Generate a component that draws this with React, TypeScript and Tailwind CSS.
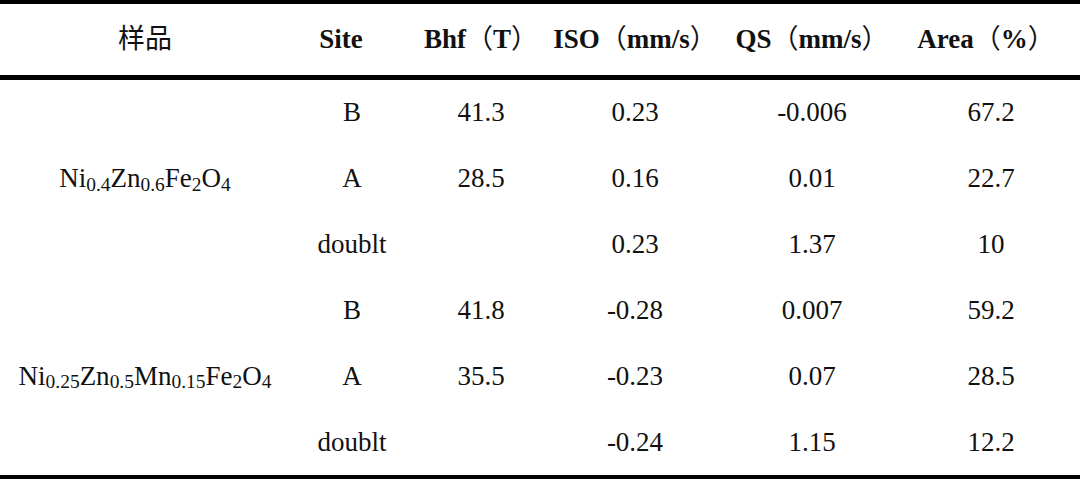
import type { ReactNode } from 'react';

type Row = { site: string; bhf: string; iso: string; qs: string; area: string };

const Sub = ({ children }: { children: ReactNode }) => (
  <sub className="text-[0.72em] -bottom-[0.32em]">{children}</sub>
);

const samples: { name: ReactNode; rows: Row[] }[] = [
  {
    name: (
      <>
        Ni<Sub>0.4</Sub>Zn<Sub>0.6</Sub>Fe<Sub>2</Sub>O<Sub>4</Sub>
      </>
    ),
    rows: [
      { site: 'B', bhf: '41.3', iso: '0.23', qs: '-0.006', area: '67.2' },
      { site: 'A', bhf: '28.5', iso: '0.16', qs: '0.01', area: '22.7' },
      { site: 'doublt', bhf: '', iso: '0.23', qs: '1.37', area: '10' },
    ],
  },
  {
    name: (
      <>
        Ni<Sub>0.25</Sub>Zn<Sub>0.5</Sub>Mn<Sub>0.15</Sub>Fe<Sub>2</Sub>O<Sub>4</Sub>
      </>
    ),
    rows: [
      { site: 'B', bhf: '41.8', iso: '-0.28', qs: '0.007', area: '59.2' },
      { site: 'A', bhf: '35.5', iso: '-0.23', qs: '0.07', area: '28.5' },
      { site: 'doublt', bhf: '', iso: '-0.24', qs: '1.15', area: '12.2' },
    ],
  },
];

const cols = 'grid grid-cols-[290px_124px_134px_174px_180px_178px]';

const Paren = ({ children }: { children: ReactNode }) => (
  <span className="font-normal">{children}</span>
);

export default function App() {
  return (
    <div className="w-[1080px] h-[480px] bg-white text-[#111] text-[27px] leading-none font-['Liberation_Serif','Noto_Sans_CJK_SC',serif]">
      {/* header with top and middle rules */}
      <div className={`${cols} h-[80px] border-t-4 border-b-[5px] border-black items-center text-center`}>
        <div>样品</div>
        <div className="font-bold pr-[22px]">Site</div>
        <div className="font-bold">
          Bhf<Paren>（</Paren>T<Paren>）</Paren>
        </div>
        <div className="font-bold">
          ISO<Paren>（</Paren>mm/s<Paren>）</Paren>
        </div>
        <div className="font-bold">
          QS<Paren>（</Paren>mm/s<Paren>）</Paren>
        </div>
        <div className="font-bold pr-[10px]">
          Area<Paren>（</Paren>%<Paren>）</Paren>
        </div>
      </div>

      {/* body */}
      <div className={`${cols} grid-rows-[repeat(6,minmax(0,1fr))] h-[395px] text-center`}>
        {samples.map((s, si) => (
          <div key={si} className="contents">
            <div className="row-span-3 flex items-center justify-center whitespace-nowrap">{s.name}</div>
            {s.rows.map((r, ri) => (
              <div key={ri} className="contents">
                <div className="flex items-center justify-center">{r.site}</div>
                <div className="flex items-center justify-center">{r.bhf}</div>
                <div className="flex items-center justify-center">{r.iso}</div>
                <div className="flex items-center justify-center">{r.qs}</div>
                <div className="flex items-center justify-center">{r.area}</div>
              </div>
            ))}
          </div>
        ))}
      </div>

      {/* bottom rule */}
      <div className="h-[4px] bg-black" />
    </div>
  );
}
